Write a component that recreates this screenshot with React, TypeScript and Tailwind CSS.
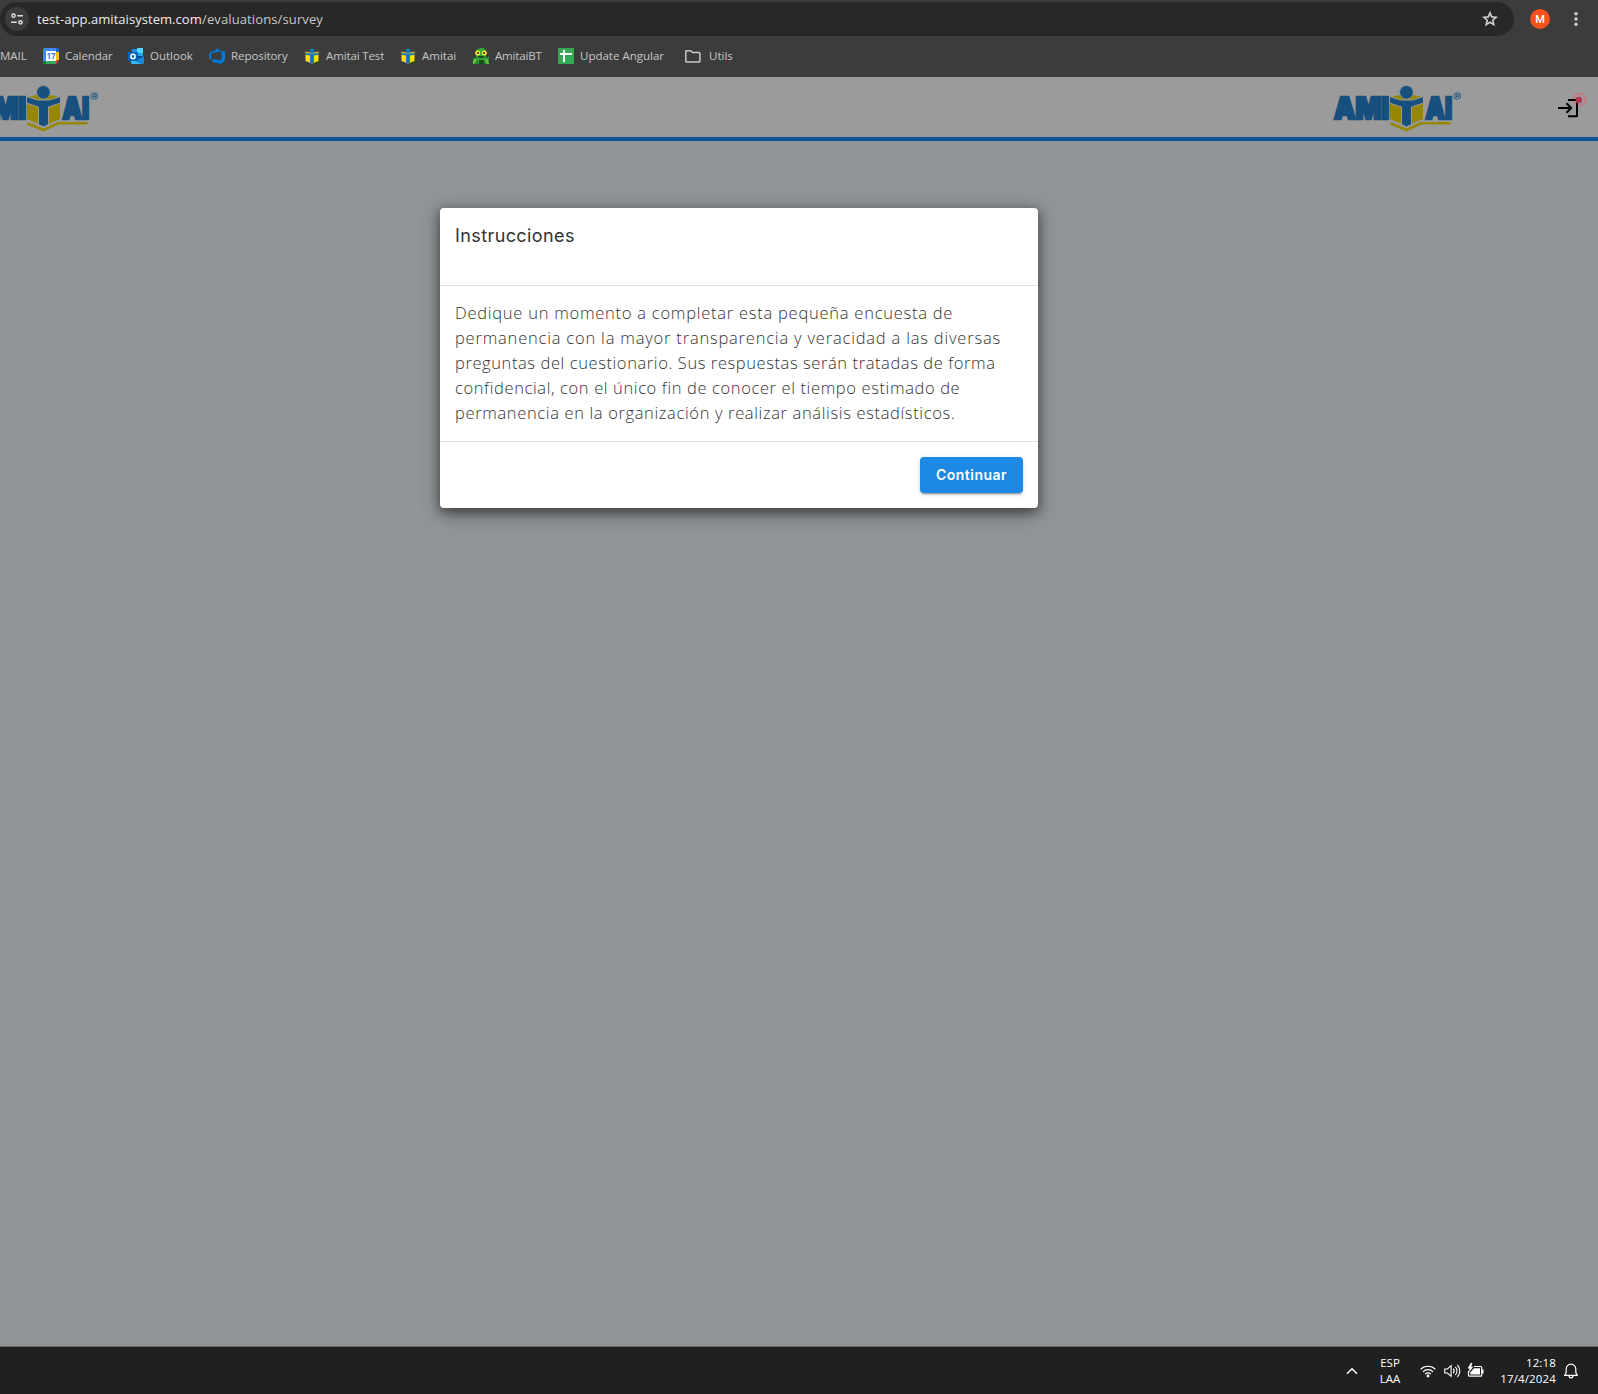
import type { ReactNode } from "react";

const UI = "font-['Open_Sans','Noto_Sans',sans-serif]";

function AmitaiLogo() {
  return (
    <svg className="h-[50px] w-[130px] shrink-0" viewBox="0 0 130 50" fill="#174f7e">
      <g
        fontFamily="Inter, sans-serif"
        fontWeight="900"
        fontSize="29.500"
        stroke="#174f7e"
        strokeWidth="2.600"
        strokeLinejoin="miter"
      >
        <text x="1" y="34.800" textLength="55" lengthAdjust="spacingAndGlyphs">
          AMI
        </text>
        <text x="92.500" y="34.800" textLength="26.500" lengthAdjust="spacingAndGlyphs">
          AI
        </text>
      </g>
      <path fill="#968700" d="M57 13l10-2h13l10 2v22l-16.700 7L57 35z" />
      <path
        stroke="#9b9b9b"
        strokeWidth="1"
        d="M56.500 12.500l11 3.500h12l11-3.500v6.500l-12 4v17.500l-5 2.500-5-2.500V23l-12-4z"
      />
      <circle cx="73.400" cy="8.300" r="6.800" stroke="#9b9b9b" strokeWidth=".7" />
      <path d="M57.500 39.500l16 6.500 14.500-6.700h29.500" fill="none" stroke="#968700" strokeWidth="2.600" />
      <circle cx="124.300" cy="12" r="3.400" fill="none" stroke="#174f7e" strokeWidth=".8" />
      <text x="122.300" y="14.300" fontSize="6" fontWeight="700" fontFamily="Liberation Sans, sans-serif">
        R
      </text>
    </svg>
  );
}

function CalendarIcon() {
  return (
    <svg className="size-4" viewBox="0 0 16 16">
      <path fill="#4285f4" d="M1 0h12v3H3v10H0V1z" />
      <path fill="#1967d2" d="M13 0h2l1 1v3h-3z" />
      <path fill="#fbbc04" d="M13 4h3v8h-3z" />
      <path fill="#34a853" d="M3 13h10v3H3z" />
      <path fill="#188038" d="M0 13h3v3H1l-1-1z" />
      <path fill="#ea4335" d="M13 12h3l-3 4z" />
      <path fill="#fff" d="M3 3h10v10H3z" />
      <text
        x="8"
        y="11"
        textAnchor="middle"
        fontSize="8"
        fontWeight="700"
        fontFamily="Open Sans, sans-serif"
        fill="#3b78e7"
      >
        17
      </text>
    </svg>
  );
}

function OutlookIcon() {
  return (
    <svg className="size-4" viewBox="0 0 16 16">
      <path fill="#1490df" d="M4 1h5v7H4z" />
      <path fill="#50d9ff" d="M9 0h6v5H9z" />
      <path fill="#28a8ea" d="M9 5h6v5H9z" />
      <path fill="#0a4c97" d="M4 8h12l-4 4H4z" />
      <path fill="#1b88d6" d="M3 15l13-7v7l-1 1H4z" />
      <path fill="#35b8f1" d="M3 10l10 6H4l-1-1z" />
      <rect y="4" width="10" height="9" rx=".6" fill="#0364b8" />
      <ellipse cx="5" cy="8.500" rx="2.100" ry="2.200" fill="none" stroke="#fff" strokeWidth="1.500" />
    </svg>
  );
}

function DevopsIcon() {
  return (
    <svg className="size-4" viewBox="0 0 16 16" fill="#0078d7">
      <path d="M16 3v9.500L12 16l-6.300-2.100V16L2.200 11.300l10.300.8V3.300zM12.600 3.300L6.800 0v2.300L1.500 3.900 0 6v4.600l2.200 1V5.300z" />
    </svg>
  );
}

function FigureIcon() {
  return (
    <svg className="size-4" viewBox="0 0 16 16">
      <path fill="#fddd00" d="M1.500 3.500L8 5l6.500-1.500V13L8 15.500 1.500 13z" />
      <path fill="#1b75bb" d="M1.500 4.500L6 5.500h4l4.500-1v2.300L10 7.500v7L8 15.500l-2-1v-7L1.500 6.800z" />
      <circle cx="8" cy="3" r="2.500" fill="#1b75bb" />
    </svg>
  );
}

function FrogIcon() {
  return (
    <svg className="size-4" viewBox="0 0 16 16">
      <path fill="#1f8f2c" d="M0 9l4 2 2 5H0zM16 8l-4 3-1 5h5z" />
      <path fill="#74c043" d="M0 13l3-3 1 2-3 4H0zM12 12l2-2 2 6h-2z" />
      <path fill="#35a83a" d="M3 2l4-2h3l3 2v6l-2 8H6L3 8z" />
      <path fill="#16501a" d="M4 8h8l-2 2H6zM6 12h5v4H6z" />
      <circle cx="4.700" cy="5" r="2.500" fill="#ffe51f" />
      <circle cx="11.300" cy="5" r="2.500" fill="#ffe51f" />
      <circle cx="5" cy="5" r="1" fill="#222" />
      <circle cx="11" cy="5" r="1" fill="#222" />
    </svg>
  );
}

function SheetIcon() {
  return (
    <svg className="size-4" viewBox="0 0 16 16">
      <rect width="16" height="16" rx="1.200" fill="#34a853" />
      <path d="M2 6h12M6 2v12" stroke="#fff" strokeWidth="2" />
    </svg>
  );
}

function FolderIcon() {
  return (
    <svg className="size-[17px]" viewBox="0 0 17 17" fill="none" stroke="#c7c7c7" strokeWidth="1.500">
      <path d="M1.800 13.200V3.400q0-.7.700-.7h4.200l1.800 1.900h6.500q.9 0 .9.900v7.700q0 .9-.9.900H2.600q-.8 0-.8-.9z" />
    </svg>
  );
}

function Bookmark({ icon, label, className }: { icon: ReactNode; label: string; className: string }) {
  return (
    <div className={`flex shrink-0 items-center whitespace-nowrap ${className}`}>
      {icon}
      <span>{label}</span>
    </div>
  );
}

function BrowserChrome() {
  return (
    <div className={`flex h-[77px] flex-col bg-[#3c3c3c] pt-[2px] ${UI}`}>
      <div className="flex h-[34px] items-center">
        <div className="flex h-[34px] w-[1514px] items-center rounded-full bg-[#282828] pl-[5px] pr-4">
          <div className="flex size-6 items-center justify-center rounded-full bg-[#3c3c3c]">
            <svg className="size-3" viewBox="0 0 12 12" fill="none" stroke="#dedede" strokeWidth="1.500">
              <circle cx="2.500" cy="2.700" r="1.600" />
              <path d="M6.300 2.700H12M0 9.300h5.700" />
              <circle cx="9.500" cy="9.300" r="1.600" />
            </svg>
          </div>
          <div className="ml-2 flex text-[13px] leading-none whitespace-nowrap">
            <span className="w-[165px] tracking-[0.05px] text-[#ececec]">test-app.amitaisystem.com</span>
            <span className="tracking-[0.12px] text-[#c7c7c7]">/evaluations/survey</span>
          </div>
          <svg
            className="ml-auto size-4"
            viewBox="0 0 16 16"
            fill="none"
            stroke="#d2d2d2"
            strokeWidth="1.600"
            strokeLinejoin="miter"
          >
            <path d="M8 1.800l1.700 4.100 4.500.4-3.400 2.900 1 4.400L8 11.300l-3.800 2.300 1-4.400-3.400-2.900 4.500-.4z" />
          </svg>
        </div>
        <div className="ml-4 flex size-5 items-center justify-center rounded-full bg-[#f4511e] font-[Roboto,sans-serif] text-[11px] leading-none font-medium text-white">
          M
        </div>
        <svg className="ml-6 h-4 w-1" viewBox="0 0 4 16" fill="#d2d2d2">
          <circle cx="2" cy="2.700" r="1.700" />
          <circle cx="2" cy="8" r="1.700" />
          <circle cx="2" cy="13.300" r="1.700" />
        </svg>
      </div>
      <div className="flex h-10 items-center text-[11.5px] leading-none text-[#c7c7c7]">
        <span className="w-[43px]">MAIL</span>
        <Bookmark className="w-[85px] gap-1.5 tracking-[-0.05px]" icon={<CalendarIcon />} label="Calendar" />
        <Bookmark className="w-[81px] gap-1.5" icon={<OutlookIcon />} label="Outlook" />
        <Bookmark className="w-[95px] gap-1.5 tracking-[-0.07px]" icon={<DevopsIcon />} label="Repository" />
        <Bookmark className="w-24 gap-1.5 tracking-[-0.13px]" icon={<FigureIcon />} label="Amitai Test" />
        <Bookmark className="w-[73px] gap-1.5" icon={<FigureIcon />} label="Amitai" />
        <Bookmark className="w-[85px] gap-1.5 tracking-[-0.15px]" icon={<FrogIcon />} label="AmitaiBT" />
        <Bookmark className="w-[126px] gap-1.5" icon={<SheetIcon />} label="Update Angular" />
        <Bookmark className="gap-2" icon={<FolderIcon />} label="Utils" />
      </div>
    </div>
  );
}

function LogoutIcon() {
  return (
    <svg className="mr-2 ml-[93px] h-10 w-[34px]" viewBox="0 0 34 40" fill="none">
      <circle cx="23.500" cy="15.700" r="6" stroke="#b7808a" strokeWidth="2.600" />
      <path
        d="M2 24h13M10.500 19.300l4.700 4.700-4.700 4.700M12 16h9v16.200h-9"
        stroke="#000"
        strokeWidth="2"
        strokeLinejoin="round"
      />
      <circle cx="22.800" cy="16" r="3.300" fill="#b43650" />
    </svg>
  );
}

function SiteHeader() {
  return (
    <header className="flex h-16 items-start overflow-hidden border-b-4 border-[#125596] bg-[#9b9b9b] pt-[7px]">
      <div className="-ml-[30px]">
        <AmitaiLogo />
      </div>
      <div className="ml-auto flex">
        <AmitaiLogo />
        <LogoutIcon />
      </div>
    </header>
  );
}

function SurveyDialog() {
  return (
    <section className="flex w-[598px] flex-col rounded bg-white shadow-[0_11px_15px_-7px_rgba(0,0,0,0.2),0_4px_18px_3px_rgba(0,0,0,0.25),0_3px_10px_1px_rgba(0,0,0,0.3)]">
      <h2 className="h-[77px] px-[15px] pt-4 font-[Inter,sans-serif] text-lg leading-6 tracking-[0.4px] text-[#333333]">
        Instrucciones
      </h2>
      <div className="flex flex-col border-y border-[#dfe0e1] px-[15px] pt-[14px] pb-[16px] font-['Open_Sans',sans-serif] text-[16.5px] leading-[25px] font-light whitespace-nowrap text-[#333333]">
        <span className="tracking-[0.75px]">Dedique un momento a completar esta pequeña encuesta de</span>
        <span className="tracking-[0.8px]">permanencia con la mayor transparencia y veracidad a las diversas</span>
        <span className="tracking-[0.59px]">preguntas del cuestionario. Sus respuestas serán tratadas de forma</span>
        <span className="tracking-[0.62px]">confidencial, con el único fin de conocer el tiempo estimado de</span>
        <span className="tracking-[0.64px]">permanencia en la organización y realizar análisis estadísticos.</span>
      </div>
      <div className="flex h-[66px] justify-end px-[15px] pt-[15px]">
        <button className="h-9 w-[103px] rounded bg-[#1e88e5] font-[Inter,sans-serif] text-sm font-semibold tracking-[0.5px] text-white shadow-[0_3px_1px_-2px_rgba(0,0,0,0.2),0_2px_2px_0_rgba(0,0,0,0.14),0_1px_5px_0_rgba(0,0,0,0.12)]">
          Continuar
        </button>
      </div>
    </section>
  );
}

function Taskbar() {
  return (
    <footer
      className={`flex h-12 items-center justify-end border-t border-[#666666] bg-[#202020] pr-5 text-[11.5px] leading-4 text-white ${UI}`}
    >
      <svg className="h-2 w-3" viewBox="0 0 12 8" fill="none" stroke="#fff" strokeWidth="1.500">
        <path d="M1 6.800l5-5 5 5" />
      </svg>
      <div className="ml-5 w-6 pt-px text-center">
        <div>ESP</div>
        <div>LAA</div>
      </div>
      <svg className="ml-[18px] h-[14px] w-4" viewBox="0 0 16 14" fill="none" stroke="#fff" strokeWidth="1.200">
        <path d="M.6 5.400a10.300 10.300 0 0 1 14.800 0M2.900 7.800a7.200 7.200 0 0 1 10.200 0M5.100 10.100a4.100 4.100 0 0 1 5.800 0" />
        <circle cx="8" cy="12" r="1.400" fill="#fff" stroke="none" />
      </svg>
      <svg className="ml-2 h-[14px] w-[17px]" viewBox="0 0 17 14" fill="none" stroke="#fff" strokeWidth="1.100">
        <path d="M.7 5h2.700l3.700-3.300v10.600L3.400 9H.7zM9.200 4.700a3.500 3.500 0 0 1 0 4.600M11.300 2.800a6 6 0 0 1 0 8.400M13.400 1a8.600 8.600 0 0 1 0 12" />
      </svg>
      <svg className="ml-1.5 h-[15px] w-[17px]" viewBox="0 0 17 15">
        <path d="M7 3.500h6.700q1 0 1 1v7.700q0 1-1 1H2.500q-1 0-1-1V8" fill="none" stroke="#fff" strokeWidth="1.200" />
        <path fill="#fff" d="M15 6.500h1.600v4H15zM7 5.300h6v6.200H3.200V9.500zM3.800 0L.6 5.600h2L1.800 9.500l4.400-5.700H4.200L5.300 0z" />
      </svg>
      <div className="ml-3 w-[60px] text-right tracking-[0.15px]">
        <div>12:18</div>
        <div>17/4/2024</div>
      </div>
      <svg className="ml-2 h-4 w-[14px]" viewBox="0 0 14 16" fill="none" stroke="#fff" strokeWidth="1.200">
        <path d="M.8 12.300L2.200 9.500V6a4.800 4.800 0 0 1 9.600 0v3.500l1.400 2.800zM5 12.800a2 2 0 0 0 4 0" />
      </svg>
    </footer>
  );
}

export default function App() {
  return (
    <div className="flex h-[1394px] w-[1598px] flex-col overflow-hidden bg-[#919597]">
      <BrowserChrome />
      <SiteHeader />
      <main className="flex-1 pt-[67px] pl-[440px]">
        <SurveyDialog />
      </main>
      <Taskbar />
    </div>
  );
}
